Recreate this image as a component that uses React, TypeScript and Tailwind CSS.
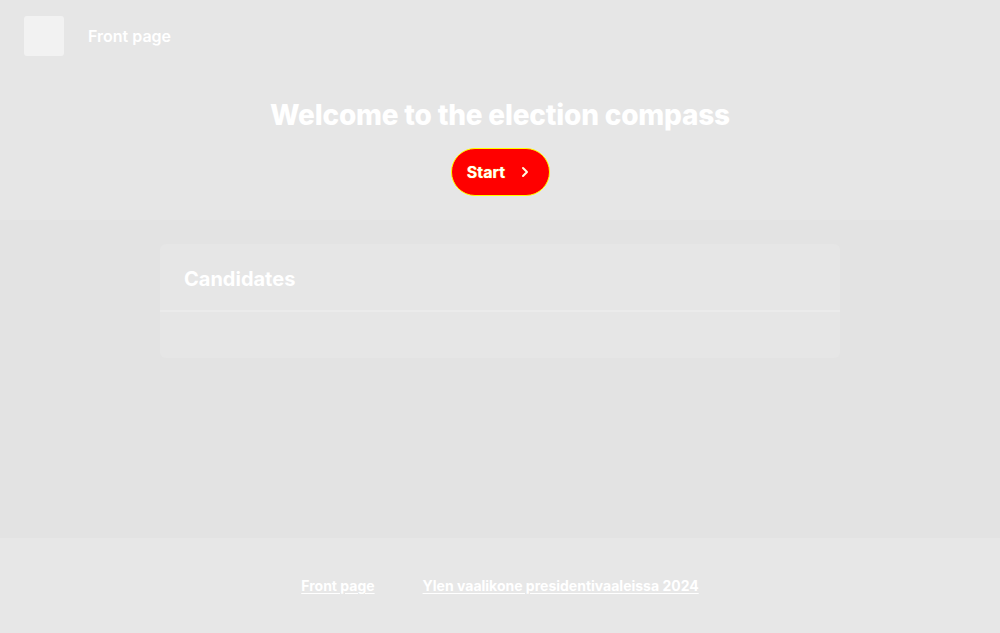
import { ChevronRight } from "lucide-react";

export default function App() {
  return (
    <div className="flex min-h-[633px] flex-col bg-[#e3e3e3] font-['Inter',sans-serif] text-white">
      {/* Header + hero */}
      <header className="h-[220px] bg-[#e6e6e6]">
        <div className="flex items-center gap-6 px-6 pt-4">
          <div className="h-10 w-10 rounded-[3px] bg-[#f2f2f2]" />
          <a className="text-[16px] font-semibold">Front page</a>
        </div>
        <div className="mt-[40px] flex flex-col items-center">
          <h1 className="text-[28px] font-extrabold leading-[38px] tracking-[-0.2px]">
            Welcome to the election compass
          </h1>
          <button className="mt-[14px] flex h-[48px] w-[99px] items-center justify-center gap-3 rounded-full border border-[#ffff00] bg-[#ff0000] text-[16px] font-bold [text-shadow:0_0_1px_#ffff00]">
            Start
            <ChevronRight className="h-4 w-4 text-[#fffbe0]" strokeWidth={3} />
          </button>
        </div>
      </header>

      {/* Main */}
      <main className="flex-1 px-[160px] pt-[24px]">
        <section className="rounded-md bg-[#e6e6e6]">
          <h2 className="px-6 pb-[19px] pt-[23px] text-[20px] font-bold leading-6">Candidates</h2>
          <div className="h-[2px] bg-[#ebebeb]" />
          <div className="h-[46px]" />
        </section>
      </main>

      {/* Footer */}
      <footer className="flex h-[95px] items-center justify-center gap-12 bg-[#e7e7e7] text-[14px] font-bold">
        <a className="underline underline-offset-2">Front page</a>
        <a className="underline underline-offset-2">Ylen vaalikone presidentivaaleissa 2024</a>
      </footer>
    </div>
  );
}
